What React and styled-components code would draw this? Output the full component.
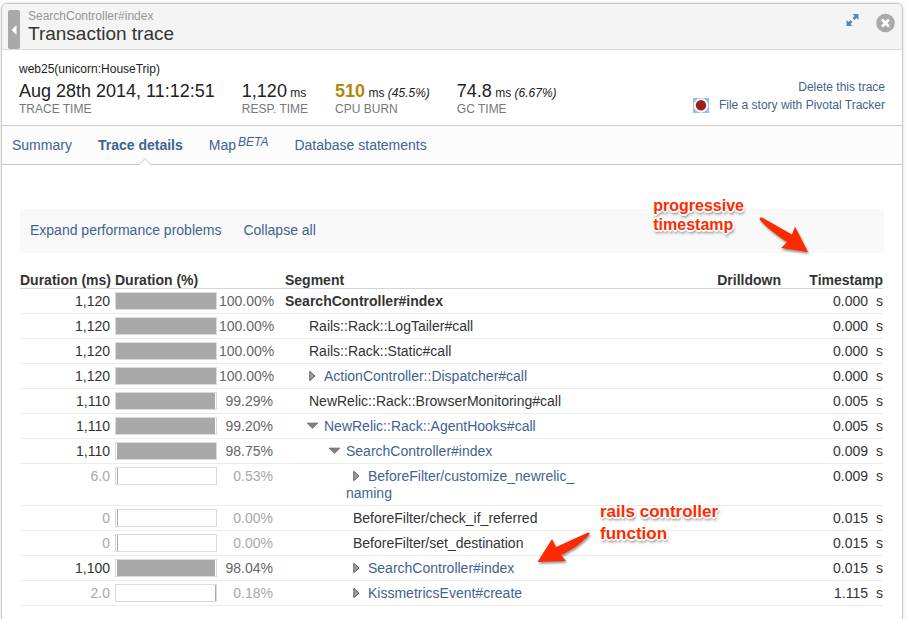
import React from "react";
import styled, { createGlobalStyle, css } from "styled-components";

const colors = {
  text: "#333333",
  link: "#41638f",
  muted: "#a8a8a8",
  line: "#c9c9c9",
  faint: "#ececec",
  callout: "#ff2a00",
};

const GlobalStyle = createGlobalStyle`
  * { box-sizing: border-box; }
  body {
    margin: 0;
    background: #fcfcfc;
    color: ${colors.text};
    font-family: "Liberation Sans", Arial, Helvetica, sans-serif;
    font-size: 14px;
  }
`;

const Panel = styled.main`
  position: relative;
  min-height: calc(100vh - 3px);
  margin: 3px 4px 0 1px;
  border: 1px solid ${colors.line};
  border-bottom: 0;
  border-radius: 6px 6px 0 0;
  background: #fff;
  box-shadow: 0 0 3px rgba(0, 0, 0, 0.15);
`;

const Header = styled.header`
  display: flex;
  align-items: flex-start;
  height: 46px;
  padding: 6px 7px 0 6px;
  border-bottom: 1px solid #d9d9d9;
  border-radius: 5px 5px 0 0;
  background: #f4f4f4;
`;

const IconButton = styled.button`
  display: flex;
  align-items: center;
  justify-content: center;
  padding: 0;
  border: 0;
  background: none;
  cursor: pointer;
`;

const BackButton = styled(IconButton)`
  width: 12px;
  height: 39px;
  border-radius: 2px;
  background: #a9a9a9;
`;

const Titles = styled.div`
  flex: 1;
  padding-left: 8px;
`;

const Crumb = styled.div`
  color: #969696;
  font-size: 12px;
  line-height: 13px;
`;

const Title = styled.h1`
  margin: 0;
  font-size: 19px;
  font-weight: normal;
  line-height: 22px;
`;

const HeaderActions = styled.div`
  display: flex;
  gap: 17px;
`;

const Details = styled.section`
  display: flex;
  justify-content: space-between;
  height: 76px;
  padding: 11px 17px 0;
  border-bottom: 1px solid ${colors.line};
`;

const Host = styled.div`
  color: #222;
  font-size: 12px;
  line-height: 16px;
`;

const Stats = styled.div`
  display: flex;
  gap: 27px;
  padding-top: 4px;
`;

const Stat = styled.div`
  white-space: nowrap;
`;

const StatValue = styled.div`
  color: #222;
  font-size: 12px;
  line-height: 20px;
`;

const Figure = styled.span`
  font-size: 18px;
  ${(p) => p.$warning && css`
    color: #b08a0c;
    font-weight: bold;
  `}
`;

const StatLabel = styled.div`
  color: #777;
  font-size: 12px;
  line-height: 12px;
`;

const Actions = styled.div`
  display: flex;
  flex-direction: column;
  align-items: flex-end;
  padding-top: 17px;
  font-size: 12px;
  line-height: 18px;
  white-space: nowrap;
`;

const Link = styled.a`
  color: ${colors.link};
  text-decoration: none;
`;

const TrackerLink = styled(Link)`
  display: flex;
  align-items: center;
  gap: 10px;
`;

const Tabs = styled.nav`
  display: flex;
  gap: 26px;
  height: 39px;
  padding: 0 10px;
  border-bottom: 1px solid ${colors.line};
  background: #fcfcfc;
  line-height: 38px;
`;

const Tab = styled(Link)`
  position: relative;
  white-space: nowrap;
  font-weight: ${(p) => (p.$active ? "bold" : "normal")};
`;

const Beta = styled.i`
  display: inline-block;
  margin-left: 2px;
  font-size: 12px;
  line-height: 12px;
  vertical-align: 4px;
`;

const Notch = styled.svg`
  position: absolute;
  bottom: -1px;
  left: calc(50% - 2px);
`;

const Content = styled.section`
  padding: 44px 18px 0;
`;

const Toolbar = styled.div`
  display: flex;
  align-items: center;
  gap: 22px;
  height: 44px;
  padding: 0 10px 2px;
  background: #f9f9f9;
`;

const TextButton = styled.button`
  padding: 0;
  border: 0;
  background: none;
  color: ${colors.link};
  font: inherit;
  cursor: pointer;
`;

const TraceTable = styled.table`
  width: calc(100% - 1px);
  margin-top: 20px;
  border-collapse: separate;
  border-spacing: 0;
  table-layout: fixed;
  line-height: 17px;
`;

const Col = styled.col`
  width: ${(p) => (p.$width ? `${p.$width}px` : "auto")};
`;

const HeadCell = styled.th`
  padding: 0 0 0 ${(p) => (p.$inset ? 5 : 0)}px;
  border-bottom: 1px solid #d4d4d4;
  text-align: ${(p) => (p.$right ? "right" : "left")};
  line-height: 15px;
  white-space: nowrap;
`;

const Cell = styled.td`
  padding: 4px 0 3px;
  border-bottom: 1px solid ${colors.faint};
  text-align: ${(p) => (p.$right ? "right" : "left")};
  vertical-align: top;
  white-space: nowrap;
  color: ${(p) => (p.$muted ? colors.muted : "inherit")};
`;

const Share = styled.div`
  display: flex;
  align-items: flex-start;
  height: 17px;
  padding-left: 5px;
`;

const Track = styled.div`
  flex: none;
  width: 102px;
  height: 18px;
  margin-top: -1px;
  border: 1px solid #dadada;
`;

const Fill = styled.div`
  min-width: 1px;
  height: 16px;
  background: #a9a9a9;
`;

const Percent = styled.span`
  flex: none;
  width: 54px;
  margin-left: 2px;
  text-align: right;
  color: ${(p) => (p.$muted ? colors.muted : "#666")};
`;

const Segment = styled.div`
  max-width: 320px;
  padding-left: ${(p) => (p.$level ? p.$level * 22 - 5 : 0)}px;
  text-indent: ${(p) => (p.$level ? 7 : 0)}px;
  white-space: normal;
  font-weight: ${(p) => (p.$level ? "normal" : "bold")};
`;

const Toggle = styled.button`
  display: inline-block;
  width: 15px;
  height: 11px;
  padding: 0;
  border: 0;
  background: none;
  text-align: left;
  text-indent: 0;
  line-height: 11px;
  cursor: pointer;

  svg {
    display: block;
    overflow: visible;
  }
`;

const Unit = styled.span`
  margin-left: 8px;
`;

const Callout = styled.div`
  position: absolute;
  color: ${colors.callout};
  font-size: ${(p) => p.$size}px;
  font-weight: bold;
  line-height: ${(p) => p.$leading}px;
  text-shadow: -2px 0 #fff, 2px 0 #fff, 0 -2px #fff, 0 2px #fff, -1px -1px #fff,
    1px -1px #fff, -1px 1px #fff, 1px 1px #fff, 1px 3px 3px rgba(0, 0, 0, 0.6);
`;

const TimestampNote = styled(Callout)`
  top: 192px;
  right: 158px;
`;

const FunctionNote = styled(Callout)`
  top: 497px;
  left: 598px;
`;

const Arrow = styled.svg`
  position: absolute;
  pointer-events: none;
  filter: drop-shadow(1px 2px 1px rgba(0, 0, 0, 0.4));
`;

const TimestampArrow = styled(Arrow)`
  top: 212px;
  right: 92px;
`;

const FunctionArrow = styled(Arrow)`
  top: 527px;
  left: 534px;
`;

const rows = [
  { ms: "1,120", pct: "100.00", name: ["SearchController#index"], level: 0, at: "0.000" },
  { ms: "1,120", pct: "100.00", name: ["Rails::Rack::LogTailer#call"], level: 1, at: "0.000" },
  { ms: "1,120", pct: "100.00", name: ["Rails::Rack::Static#call"], level: 1, at: "0.000" },
  { ms: "1,120", pct: "100.00", name: ["ActionController::Dispatcher#call"], level: 1, toggle: "closed", at: "0.000" },
  { ms: "1,110", pct: "99.29", name: ["NewRelic::Rack::BrowserMonitoring#call"], level: 1, at: "0.005" },
  { ms: "1,110", pct: "99.20", name: ["NewRelic::Rack::AgentHooks#call"], level: 1, toggle: "open", at: "0.005" },
  { ms: "1,110", pct: "98.75", start: 1, name: ["SearchController#index"], level: 2, toggle: "open", at: "0.009" },
  { ms: "6.0", pct: "0.53", start: 1, muted: true, name: ["BeforeFilter/customize_newrelic_", "naming"], level: 3, toggle: "closed", at: "0.009" },
  { ms: "0", pct: "0.00", start: 1, muted: true, name: ["BeforeFilter/check_if_referred"], level: 3, at: "0.015" },
  { ms: "0", pct: "0.00", start: 1, muted: true, name: ["BeforeFilter/set_destination"], level: 3, at: "0.015" },
  { ms: "1,100", pct: "98.04", start: 1, name: ["SearchController#index"], level: 3, toggle: "closed", at: "0.015" },
  { ms: "2.0", pct: "0.18", start: 99, muted: true, name: ["KissmetricsEvent#create"], level: 3, toggle: "closed", at: "1.115" },
];

function SegmentToggle({ open }) {
  return (
    <Toggle type="button" aria-expanded={open} aria-label={open ? "Collapse" : "Expand"}>
      <svg width="10" height="11" viewBox="0 0 10 11">
        {open ? (
          <path d="M-2 3H9L3.5 8.5Z" fill="#828282" stroke="#666" strokeWidth="0.6" />
        ) : (
          <path d="M0.8 1.3L6 6L0.8 10.7Z" fill="#a0a0a0" stroke="#5c5c5c" />
        )}
      </svg>
    </Toggle>
  );
}

function TraceRow({ row }) {
  const label = row.name.map((part, i) => (
    <React.Fragment key={part}>
      {i > 0 && <wbr />}
      {part}
    </React.Fragment>
  ));
  return (
    <tr>
      <Cell $right $muted={row.muted}>{row.ms}</Cell>
      <Cell>
        <Share>
          <Track>
            <Fill style={{ width: `${row.pct}%`, marginLeft: `${row.start || 0}%` }} />
          </Track>
          <Percent $muted={row.muted}>{row.pct}%</Percent>
        </Share>
      </Cell>
      <Cell>
        <Segment $level={row.level}>
          {row.toggle && <SegmentToggle open={row.toggle === "open"} />}
          {row.toggle ? <Link href="#segment">{label}</Link> : label}
        </Segment>
      </Cell>
      <Cell />
      <Cell $right>
        {row.at}
        <Unit>s</Unit>
      </Cell>
    </tr>
  );
}

export default function App() {
  return (
    <>
      <GlobalStyle />
      <Panel>
        <Header>
          <BackButton type="button" aria-label="Back">
            <svg width="6" height="10" viewBox="0 0 6 10">
              <path d="M5.5 0V10L0.5 5Z" fill="#fff" />
            </svg>
          </BackButton>
          <Titles>
            <Crumb>SearchController#index</Crumb>
            <Title>Transaction trace</Title>
          </Titles>
          <HeaderActions>
            <IconButton type="button" aria-label="Expand panel">
              <svg width="13" height="26" viewBox="0 0 13 26">
                <path
                  d="M6.5 4H12.5V10L10.5 8L8.5 10L6.5 8L8.5 6Z M0.5 10L2.5 12L4.5 10L6.5 12L4.5 14L6.5 16H0.5Z"
                  fill="#4f8eae"
                />
              </svg>
            </IconButton>
            <IconButton type="button" aria-label="Close">
              <svg width="19" height="26" viewBox="0 0 19 26">
                <circle cx="9.5" cy="13" r="9.3" fill="#a9a9a9" />
                <path d="M6 9.5L13 16.5M13 9.5L6 16.5" stroke="#fff" strokeWidth="2.6" />
              </svg>
            </IconButton>
          </HeaderActions>
        </Header>

        <Details>
          <div>
            <Host>web25(unicorn:HouseTrip)</Host>
            <Stats>
              <Stat>
                <StatValue><Figure>Aug 28th 2014, 11:12:51</Figure></StatValue>
                <StatLabel>TRACE TIME</StatLabel>
              </Stat>
              <Stat>
                <StatValue><Figure>1,120</Figure> ms</StatValue>
                <StatLabel>RESP. TIME</StatLabel>
              </Stat>
              <Stat>
                <StatValue><Figure $warning>510</Figure> ms <i>(45.5%)</i></StatValue>
                <StatLabel>CPU BURN</StatLabel>
              </Stat>
              <Stat>
                <StatValue><Figure>74.8</Figure> ms <i>(6.67%)</i></StatValue>
                <StatLabel>GC TIME</StatLabel>
              </Stat>
            </Stats>
          </div>
          <Actions>
            <Link href="#delete">Delete this trace</Link>
            <TrackerLink href="#story">
              <svg width="16" height="15" viewBox="0 0 16 15">
                <rect width="16" height="15" fill="#91c0ea" />
                <circle cx="8" cy="7.5" r="7.2" fill="#fff" />
                <circle cx="8" cy="7.2" r="5.2" fill="#a01d20" />
              </svg>
              File a story with Pivotal Tracker
            </TrackerLink>
          </Actions>
        </Details>

        <Tabs>
          <Tab href="#summary">Summary</Tab>
          <Tab href="#details" $active aria-current="page">
            Trace details
            <Notch width="14" height="8" viewBox="0 0 14 8">
              <path d="M1 8L7 1.5L13 8" fill="#fff" stroke={colors.line} />
            </Notch>
          </Tab>
          <Tab href="#map">Map<Beta>BETA</Beta></Tab>
          <Tab href="#database">Database statements</Tab>
        </Tabs>

        <Content>
          <Toolbar>
            <TextButton type="button">Expand performance problems</TextButton>
            <TextButton type="button">Collapse all</TextButton>
          </Toolbar>
          <TraceTable>
            <colgroup>
              <Col $width={90} />
              <Col $width={175} />
              <Col />
              <Col $width={64} />
              <Col $width={102} />
            </colgroup>
            <thead>
              <tr>
                <HeadCell $right>Duration (ms)</HeadCell>
                <HeadCell $inset>Duration (%)</HeadCell>
                <HeadCell>Segment</HeadCell>
                <HeadCell $right>Drilldown</HeadCell>
                <HeadCell $right>Timestamp</HeadCell>
              </tr>
            </thead>
            <tbody>
              {rows.map((row, i) => (
                <TraceRow key={i} row={row} />
              ))}
            </tbody>
          </TraceTable>
        </Content>

        <TimestampNote $size={16} $leading={19}>
          progressive
          <br />
          timestamp
        </TimestampNote>
        <TimestampArrow width="52" height="42" viewBox="0 0 52 42">
          <path
            d="M2 4C1 2 3 1 5 2L34 18.5L37 10.5L50 36L23 32L29 26C20 20 9 12 2 4Z"
            fill={colors.callout}
          />
        </TimestampArrow>
        <FunctionNote $size={17} $leading={22}>
          rails controller
          <br />
          function
        </FunctionNote>
        <FunctionArrow width="56" height="36" viewBox="0 0 56 36">
          <path
            d="M52 1.5C54 1 54 3 52 5C43 14 34 20 25 24L30 30L1.5 31L16 8L20 16Z"
            fill={colors.callout}
          />
        </FunctionArrow>
      </Panel>
    </>
  );
}
